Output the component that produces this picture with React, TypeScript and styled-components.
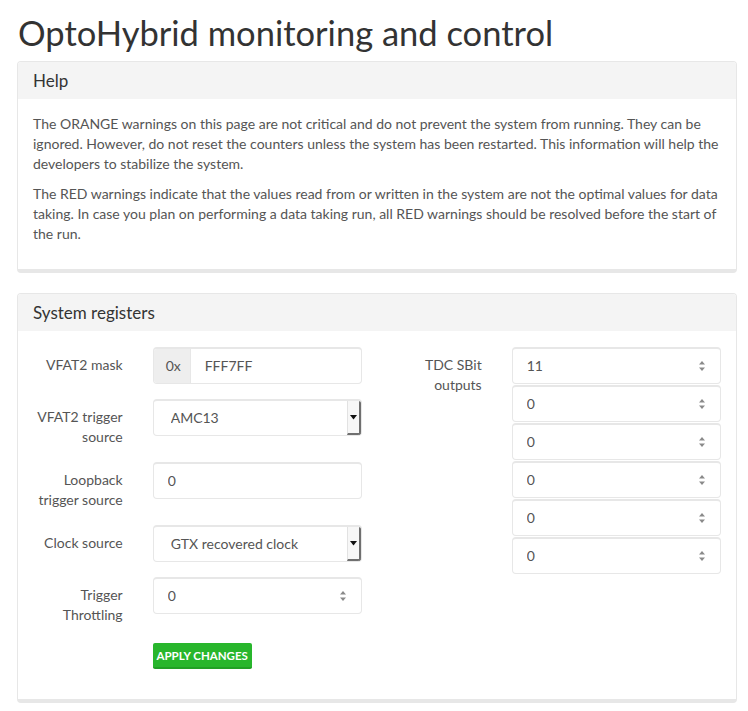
import React from "react";
import styled, { createGlobalStyle } from "styled-components";

const GlobalStyle = createGlobalStyle`
  html, body { margin: 0; padding: 0; background: #ffffff; }
  body {
    font-family: Lato, "Open Sans", "Liberation Sans", sans-serif;
    font-size: 14px;
    line-height: 20px;
    color: #555555;
  }
  * { box-sizing: border-box; }
`;

const Page = styled.div`
  padding: 0 11px 20px 17px;
`;

const Title = styled.h1`
  margin: 0;
  padding: 13px 0 0 1px;
  height: 61px;
  font-size: 34.5px;
  line-height: 40px;
  font-weight: 400;
  color: #333333;
`;

const Panel = styled.section`
  background: #ffffff;
  border: 1px solid #e7e7e7;
  border-bottom-width: 4px;
  border-radius: 4px;
  margin-bottom: 20px;
  overflow: hidden;
`;

const PanelHeading = styled.div`
  background: #f4f4f4;
  padding: 10px 15px;
  font-size: 17px;
  line-height: 17px;
  color: #333333;
`;

const PanelBody = styled.div<{ $top?: number }>`
  padding: ${(p) => p.$top ?? 15}px 15px 15px;
`;

const Para = styled.p`
  margin: 0 0 10px;
`;

const Columns = styled.div`
  display: grid;
  grid-template-columns: minmax(0, 1fr) minmax(0, 1fr);
  column-gap: 30px;
  align-items: start;
`;

const Form = styled.div`
  display: flex;
  flex-direction: column;
  min-width: 0;
`;

const Row = styled.div`
  display: grid;
  grid-template-columns: calc(33.333% - 20px) minmax(0, 1fr);
  column-gap: 30px;
  margin-bottom: 15px;
  align-items: start;
`;

const Label = styled.label`
  padding-top: 8px;
  text-align: right;
  color: #555555;
  line-height: 20px;
`;

const Control = styled.div`
  grid-column: 2;
  display: flex;
  flex-direction: column;
  align-items: stretch;
  gap: 1px;
  min-width: 0;
`;

const Box = styled.div`
  display: flex;
  align-items: stretch;
  height: 37px;
  border: 1px solid #e7e7e7;
  border-top-width: 2px;
  border-radius: 4px;
  background: #ffffff;
  overflow: hidden;
`;

const Addon = styled.span`
  display: flex;
  align-items: center;
  padding: 0 12px;
  background: #eeeeee;
  border-right: 1px solid #e7e7e7;
  color: #555555;
  width: 37px;
`;

const Input = styled.input<{ $pad?: number }>`
  flex: 1;
  width: 0;
  min-width: 0;
  border: none;
  outline: none;
  background: transparent;
  padding: 0 0 0 ${(p) => p.$pad ?? 14}px;
  font: inherit;
  color: #555555;
`;

const Spinner = styled.span`
  display: flex;
  align-items: center;
  justify-content: center;
  width: 36px;
`;

const ArrowBox = styled.span`
  display: flex;
  align-items: center;
  justify-content: center;
  width: 14px;
  background: #f7f7f7;
  border-left: 1px solid #e2e2e2;
  border-right: 2px solid #6f6f6f;
  border-bottom: 2px solid #6f6f6f;
`;

const Button = styled.button`
  align-self: flex-start;
  margin-top: 3px;
  height: 26px;
  width: 99px;
  padding: 0;
  border: none;
  border-bottom: 2px solid #21a025;
  border-radius: 2px;
  background: #28b62c;
  color: #ffffff;
  font-family: inherit;
  font-size: 11.5px;
  font-weight: 700;
  letter-spacing: 0;
  text-transform: uppercase;
  white-space: nowrap;
`;

const SpinIcon = () => (
  <svg width="8" height="12" viewBox="0 0 8 12">
    <path d="M4 1 L7 4.5 L1 4.5 Z" fill="#8a8a8a" />
    <path d="M1 7.5 L7 7.5 L4 11 Z" fill="#8a8a8a" />
  </svg>
);

const CaretIcon = () => (
  <svg width="7" height="5" viewBox="0 0 7 5">
    <path d="M0 0 L7 0 L3.5 4.5 Z" fill="#111111" />
  </svg>
);

const NumberField = ({ value }: { value: string }) => (
  <Box>
    <Input readOnly value={value} />
    <Spinner>
      <SpinIcon />
    </Spinner>
  </Box>
);

const SelectField = ({ value }: { value: string }) => (
  <Box>
    <Input readOnly value={value} $pad={17} />
    <ArrowBox>
      <CaretIcon />
    </ArrowBox>
  </Box>
);

const TextField = ({ value }: { value: string }) => (
  <Box>
    <Input readOnly value={value} />
  </Box>
);

export default function App() {
  return (
    <Page>
      <GlobalStyle />
      <Title>OptoHybrid monitoring and control</Title>
      <Panel>
        <PanelHeading>Help</PanelHeading>
        <PanelBody>
          <Para>
            The ORANGE warnings on this page are not critical and do not prevent the system from
            running. They can be ignored. However, do not reset the counters unless the system has
            been restarted. This information will help the developers to stabilize the system.
          </Para>
          <Para>
            The RED warnings indicate that the values read from or written in the system are not the
            optimal values for data taking. In case you plan on performing a data taking run, all RED
            warnings should be resolved before the start of the run.
          </Para>
        </PanelBody>
      </Panel>
      <Panel>
        <PanelHeading>System registers</PanelHeading>
        <PanelBody $top={16}>
          <Columns>
            <Form>
              <Row>
                <Label>VFAT2 mask</Label>
                <Box>
                  <Addon>0x</Addon>
                  <Input readOnly value="FFF7FF" />
                </Box>
              </Row>
              <Row>
                <Label>VFAT2 trigger source</Label>
                <SelectField value="AMC13" />
              </Row>
              <Row>
                <Label>Loopback trigger source</Label>
                <TextField value="0" />
              </Row>
              <Row>
                <Label>Clock source</Label>
                <SelectField value="GTX recovered clock" />
              </Row>
              <Row>
                <Label>Trigger Throttling</Label>
                <NumberField value="0" />
              </Row>
              <Row>
                <Control>
                  <Button type="button">Apply changes</Button>
                </Control>
              </Row>
            </Form>
            <Form>
              <Row>
                <Label>TDC SBit outputs</Label>
                <Control>
                  {["11", "0", "0", "0", "0", "0"].map((v, i) => (
                    <NumberField key={i} value={v} />
                  ))}
                </Control>
              </Row>
            </Form>
          </Columns>
        </PanelBody>
      </Panel>
    </Page>
  );
}
